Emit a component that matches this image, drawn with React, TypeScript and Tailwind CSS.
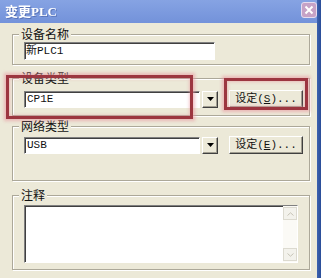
const mono = "font-['Liberation_Mono','Noto_Sans_CJK_SC',monospace]";
const cjk = "font-['Noto_Sans_CJK_SC','Liberation_Sans',sans-serif]";

const sunken =
  "border border-t-[#808080] border-l-[#808080] border-r-white border-b-white shadow-[inset_1px_1px_0_#404040] bg-white";
const raised =
  "border border-t-white border-l-white border-r-[#404040] border-b-[#404040] shadow-[inset_-1px_-1px_0_#a09d90] bg-[#ece9d8]";

function Group({
  label,
  className,
  children,
}: {
  label: string;
  className: string;
  children: React.ReactNode;
}) {
  return (
    <div
      className={`ml-[12px] w-[298px] border border-[#aca899] shadow-[inset_1px_1px_0_#fff,1px_1px_0_#fff] ${className}`}
    >
      <div
        className={`-mt-[8px] ml-[6px] w-fit bg-[#ece9d8] px-[2px] text-[12px] leading-[14px] text-[#111] ${cjk}`}
      >
        {label}
      </div>
      {children}
    </div>
  );
}

function Combo({ value }: { value: string }) {
  return (
    <div className="flex items-center">
      <div
        className={`flex h-[17px] w-[176px] items-center pl-[2px] text-[11px] text-[#111] ${sunken} ${mono}`}
      >
        {value}
      </div>
      <div
        className={`ml-[2px] flex h-[17px] w-[16px] items-center justify-center ${raised}`}
      >
        <svg width="7" height="4" viewBox="0 0 7 4">
          <path d="M0 0h7L3.5 4z" fill="#000" />
        </svg>
      </div>
    </div>
  );
}

function SetButton({ letter }: { letter: string }) {
  return (
    <div
      className={`ml-[11px] flex h-[18px] w-[74px] items-center justify-center text-[11px] text-[#111] ${raised} ${mono}`}
    >
      设定(<span className="underline">{letter}</span>)...
    </div>
  );
}

export default function App() {
  return (
    <div className="relative flex h-[278px] w-[321px] overflow-hidden bg-[#ece9d8]">
      <div className="flex w-[317px] flex-col">
        <div className="flex h-[23px] items-center justify-between bg-gradient-to-b from-[#86a3e3] to-[#7392da] pl-[5px]">
          <span
            className={`text-[13px] font-bold text-white drop-shadow-[1px_1px_0_#5a74b8] font-['Liberation_Serif','Noto_Sans_CJK_SC',serif]`}
          >
            变更PLC
          </span>
          <div className="mb-[4px] flex h-[16px] w-[16px] items-center justify-center rounded-[3px] border border-[#e6dcef] bg-[#c6a2c6]">
            <svg width="10" height="10" viewBox="0 0 10 10">
              <path d="M1.5 1.5l7 7M8.5 1.5l-7 7" stroke="#fff" strokeWidth="2" />
            </svg>
          </div>
        </div>

        <Group label="设备名称" className="mt-[11px] pb-[4px]">
          <div
            className={`ml-[11px] mt-[1px] flex h-[18px] w-[191px] items-center pl-[1px] text-[11px] text-[#111] ${sunken} ${mono}`}
          >
            新PLC1
          </div>
        </Group>

        <Group label="设备类型" className="mt-[13px] pb-[7px]">
          <div className="ml-[11px] mt-[5px] flex h-[18px] items-center">
            <Combo value="CP1E" />
            <SetButton letter="S" />
          </div>
        </Group>

        <Group label="网络类型" className="mt-[10px] pb-[26px]">
          <div className="ml-[11px] mt-[3px] flex h-[18px] items-center">
            <Combo value="USB" />
            <SetButton letter="E" />
          </div>
        </Group>

        <Group label="注释" className="mt-[14px] pb-[6px]">
          <div className={`ml-[11px] mt-[3px] flex h-[58px] w-[274px] justify-end ${sunken}`}>
            <div className="flex w-[14px] flex-col justify-between bg-[#fbfaf6] py-[1px]">
              <div className="flex h-[13px] items-center justify-center border border-[#dcdad0] bg-[#f3f2ec]">
                <svg width="7" height="4" viewBox="0 0 7 4">
                  <path d="M0.5 3.5L3.5 0.8 6.5 3.5" stroke="#c6c3b6" fill="none" />
                </svg>
              </div>
              <div className="flex h-[13px] items-center justify-center border border-[#dcdad0] bg-[#f3f2ec]">
                <svg width="7" height="4" viewBox="0 0 7 4">
                  <path d="M0.5 0.5L3.5 3.2 6.5 0.5" stroke="#c6c3b6" fill="none" />
                </svg>
              </div>
            </div>
          </div>
        </Group>
      </div>
      <div className="w-[4px] bg-gradient-to-r from-[#3d62b0] to-[#2a4d98]" />

      <div className="pointer-events-none absolute left-[6px] top-[75px] h-[44px] w-[187px] border-[3px] border-[#9c3640] shadow-[0_0_3px_2px_rgba(232,150,160,0.6),inset_0_0_3px_1px_rgba(232,150,160,0.5)]" />
      <div className="pointer-events-none absolute left-[224px] top-[78px] h-[32px] w-[84px] border-[3px] border-[#9c3640] shadow-[0_0_3px_2px_rgba(232,150,160,0.6),inset_0_0_3px_1px_rgba(232,150,160,0.5)]" />
    </div>
  );
}
